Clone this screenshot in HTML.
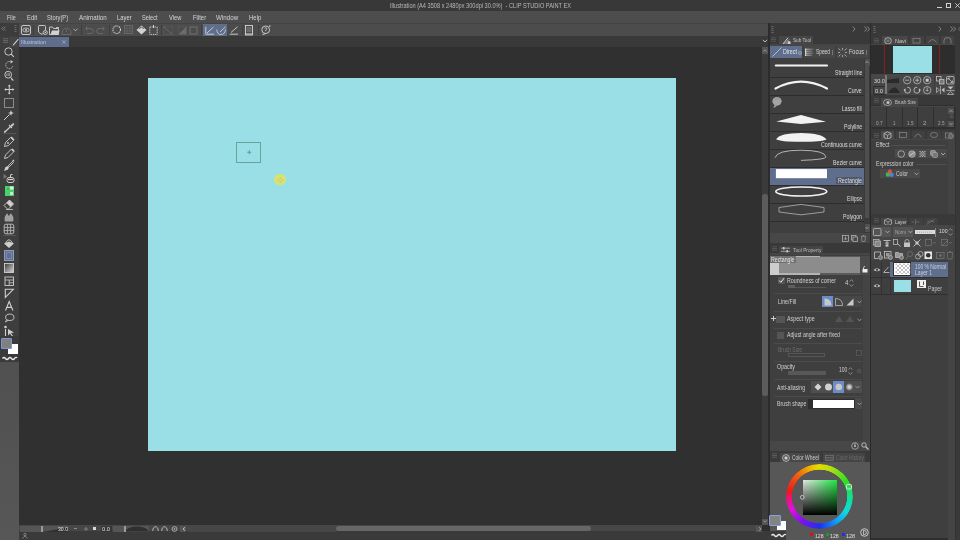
<!DOCTYPE html>
<html><head><meta charset="utf-8">
<style>
*{box-sizing:border-box;margin:0;padding:0}
html,body{width:960px;height:540px;overflow:hidden;background:#2e2e2e;font-family:"Liberation Sans",sans-serif;color:#d8d8d8}
.a{position:absolute}
svg.a{overflow:visible}
.t{position:absolute;white-space:nowrap;line-height:1;transform-origin:0 0}
</style></head><body>
<div class="a" style="left:0px;top:0px;width:960px;height:11.3px;background:#383838;"></div>
<div class="t" style="transform:scaleX(0.8048);left:390px;top:2.47px;font-size:7px;color:#b8b8b8;font-weight:normal;">Illustration (A4 3508 x 2480px 300dpi 30.0%)&nbsp; - CLIP STUDIO PAINT EX</div>
<div class="a" style="left:936.7px;top:7px;width:5.2px;height:1px;background:#cfcfcf;"></div>
<div class="a" style="left:945.9px;top:3px;width:5.4px;height:5px;border:1px solid #d4d4d4;background:transparent;"></div>
<svg class="a" style="left:954.8px;top:3px;" width="5" height="5" viewBox="0 0 5 5"><path d="M0.3 0.3L4.7 4.7M4.7 0.3L0.3 4.7" stroke="#d4d4d4" stroke-width="0.9"/></svg>
<div class="a" style="left:0px;top:11.3px;width:960px;height:11.7px;background:#4d4d4d;"></div>
<div class="t" style="transform:scaleX(0.8298);left:7.3px;top:15.00px;font-size:6.5px;color:#d6d6d6;font-weight:normal;">File</div>
<div class="t" style="transform:scaleX(0.9105);left:27px;top:15.00px;font-size:6.5px;color:#d6d6d6;font-weight:normal;">Edit</div>
<div class="t" style="transform:scaleX(0.8849);left:47.4px;top:15.00px;font-size:6.5px;color:#d6d6d6;font-weight:normal;">Story(P)</div>
<div class="t" style="transform:scaleX(0.9583);left:78.8px;top:15.00px;font-size:6.5px;color:#d6d6d6;font-weight:normal;">Animation</div>
<div class="t" style="transform:scaleX(0.8976);left:117.4px;top:15.00px;font-size:6.5px;color:#d6d6d6;font-weight:normal;">Layer</div>
<div class="t" style="transform:scaleX(0.8629);left:142.4px;top:15.00px;font-size:6.5px;color:#d6d6d6;font-weight:normal;">Select</div>
<div class="t" style="transform:scaleX(0.8796);left:169px;top:15.00px;font-size:6.5px;color:#d6d6d6;font-weight:normal;">View</div>
<div class="t" style="transform:scaleX(0.9064);left:192.7px;top:15.00px;font-size:6.5px;color:#d6d6d6;font-weight:normal;">Filter</div>
<div class="t" style="transform:scaleX(0.9600);left:216px;top:15.00px;font-size:6.5px;color:#d6d6d6;font-weight:normal;">Window</div>
<div class="t" style="transform:scaleX(0.9271);left:248.9px;top:15.00px;font-size:6.5px;color:#d6d6d6;font-weight:normal;">Help</div>
<div class="a" style="left:0px;top:23px;width:769px;height:13px;background:#4c4c4c;border-top:1px solid #444444"></div>
<div class="a" style="left:0px;top:23px;width:19px;height:13px;background:#3c3c3c;"></div>
<div class="a" style="left:19px;top:36px;width:750px;height:11px;background:#393939;"></div>
<div class="a" style="left:0px;top:36px;width:19px;height:11px;background:#3e3e3e;"></div>
<div class="a" style="left:0px;top:47px;width:19px;height:315px;background:#3e3e3e;"></div>
<div class="a" style="left:0px;top:362px;width:19px;height:178px;background:linear-gradient(#505050,#575757);"></div>
<div class="a" style="left:19px;top:47px;width:743px;height:478px;background:#303030;"></div>
<div class="a" style="left:148px;top:78px;width:528px;height:373px;background:#99dfe5;"></div>
<div class="a" style="left:762px;top:47px;width:6px;height:478px;background:#3b3b3b;"></div>
<div class="a" style="left:768px;top:23px;width:2px;height:517px;background:#2c2c2c;"></div>
<div class="a" style="left:19px;top:525px;width:743px;height:6px;background:#474747;"></div>
<div class="a" style="left:19px;top:531px;width:750px;height:9px;background:#3a3a3a;"></div>
<div class="a" style="left:770px;top:23px;width:100px;height:11px;background:#383838;"></div>
<div class="a" style="left:770px;top:34px;width:100px;height:11px;background:#353535;"></div>
<div class="a" style="left:770px;top:45px;width:100px;height:195px;background:#3d3d3d;"></div>
<div class="a" style="left:870px;top:23px;width:1px;height:517px;background:#2a2a2a;"></div>
<div class="a" style="left:871px;top:23px;width:89px;height:11px;background:#383838;"></div>
<div class="a" style="left:871px;top:34px;width:89px;height:10px;background:#353535;"></div>
<div class="a" style="left:871px;top:44px;width:84px;height:29px;background:#2c2c2c;"></div>
<div class="a" style="left:893px;top:45px;width:39px;height:28px;background:#99dfe5;"></div>
<svg class="a" style="left:1px;top:26px;" width="5" height="5" viewBox="0 0 5 5"><path d="M2.5 0.5L0.6 2.5L2.5 4.5M4.6 0.5L2.7 2.5L4.6 4.5" stroke="#8a8a8a" fill="none" stroke-width="0.7"/></svg>
<svg class="a" style="left:14px;top:25px;" width="3" height="7" viewBox="0 0 3 7"><path d="M1.5 0V7" stroke="#6a6a6a" stroke-width="2" stroke-dasharray="1 1"/></svg>
<svg class="a" style="left:21px;top:25px;" width="10" height="10" viewBox="0 0 10 10"><rect x="0.5" y="0.5" width="9" height="9" rx="1.5" fill="none" stroke="#d2d2d2" stroke-width="0.9"/><ellipse cx="5" cy="5" rx="3.2" ry="2" fill="none" stroke="#d2d2d2" stroke-width="0.8"/><circle cx="5" cy="5" r="1" fill="#d2d2d2"/></svg>
<div class="a" style="left:33px;top:25px;width:1px;height:10px;background:#3e3e3e;"></div>
<svg class="a" style="left:38px;top:25px;" width="10" height="10" viewBox="0 0 10 10"><path d="M1 0.5H6.5Q7.5 0.5 7.5 1.5V5M1 0.5Q0.5 0.5 0.5 1.5V7L3 9H5" fill="none" stroke="#d2d2d2" stroke-width="0.9"/><circle cx="7.3" cy="7.5" r="2" fill="none" stroke="#d2d2d2" stroke-width="0.9"/><circle cx="7.3" cy="7.5" r="0.7" fill="#d2d2d2"/></svg>
<svg class="a" style="left:49px;top:26px;" width="11" height="9" viewBox="0 0 11 9"><path d="M0.5 1.5V8.5H9.5V2.5H4.5L3.5 1H0.5Z" fill="none" stroke="#d2d2d2" stroke-width="0.9"/><path d="M1.5 8.5L3 4.5H10.5L9.5 8.5Z" fill="#d2d2d2"/><path d="M7 1.5H10" stroke="#d2d2d2" stroke-width="0.8"/></svg>
<svg class="a" style="left:61px;top:27px;" width="11" height="8" viewBox="0 0 11 8"><path d="M1 7.5H10V6Q10 2 5.5 1Q1 2 1 6Z" fill="none" stroke="#6c6c6c" stroke-width="0.9"/><path d="M5.5 2.5V5" stroke="#6c6c6c" stroke-width="0.9"/></svg>
<svg class="a" style="left:73px;top:28px;" width="5" height="4" viewBox="0 0 5 4"><path d="M0.5 0.8L2.5 2.8L4.5 0.8" fill="none" stroke="#bdbdbd" stroke-width="0.9"/></svg>
<div class="a" style="left:81px;top:25px;width:1px;height:10px;background:#3e3e3e;"></div>
<svg class="a" style="left:85px;top:26px;" width="9" height="8" viewBox="0 0 9 8"><path d="M2.5 0.5L0.5 2.5L2.5 4.5M0.8 2.5H5Q8.5 2.5 8.5 5.2Q8.5 7.5 5 7.5H2" fill="none" stroke="#6c6c6c" stroke-width="0.9"/></svg>
<svg class="a" style="left:96px;top:26px;" width="9" height="8" viewBox="0 0 9 8"><path d="M6.5 0.5L8.5 2.5L6.5 4.5M8.2 2.5H4Q0.5 2.5 0.5 5.2Q0.5 7.5 4 7.5H7" fill="none" stroke="#6c6c6c" stroke-width="0.9"/></svg>
<div class="a" style="left:109px;top:25px;width:1px;height:10px;background:#3e3e3e;"></div>
<svg class="a" style="left:112px;top:25px;" width="10" height="10" viewBox="0 0 10 10"><circle cx="4.7" cy="4.7" r="3.8" fill="none" stroke="#d2d2d2" stroke-width="1.1" stroke-dasharray="1.2 0.8"/></svg>
<svg class="a" style="left:124px;top:25px;" width="10" height="9" viewBox="0 0 10 9"><rect x="0.5" y="0.5" width="8" height="8" fill="none" stroke="#6c6c6c" stroke-width="0.9"/><path d="M0.5 3H8.5M0.5 6H8.5M3 0.5V8.5M6 0.5V8.5" stroke="#6c6c6c" stroke-width="0.6"/></svg>
<svg class="a" style="left:136px;top:25px;" width="11" height="10" viewBox="0 0 11 10"><path d="M5.5 0.5L10.5 5L5.5 9.5L0.5 5Z" fill="#d2d2d2"/><path d="M3 3.5Q5.5 1 8 3.5" stroke="#4a4a4a" stroke-width="0.9" fill="none"/></svg>
<svg class="a" style="left:149px;top:25px;" width="9" height="10" viewBox="0 0 9 10"><rect x="0.8" y="2" width="7.4" height="7.4" fill="none" stroke="#d2d2d2" stroke-width="1" stroke-dasharray="1 0.8"/><path d="M4.5 0V3" stroke="#d2d2d2" stroke-width="1"/></svg>
<div class="a" style="left:161px;top:25px;width:1px;height:10px;background:#3e3e3e;"></div>
<svg class="a" style="left:163px;top:26px;" width="10" height="9" viewBox="0 0 10 9"><rect x="0.5" y="0.5" width="9" height="8" fill="none" stroke="#5a5a5a" stroke-width="0.6"/><path d="M0.5 0.5L9.5 8.5" stroke="#6c6c6c" stroke-width="0.9"/></svg>
<svg class="a" style="left:178px;top:26px;" width="9" height="9" viewBox="0 0 9 9"><path d="M8.5 0.5V8.5H0.5Z" fill="#6c6c6c"/><rect x="0.5" y="0.5" width="8" height="8" fill="none" stroke="#5a5a5a" stroke-width="0.6"/></svg>
<svg class="a" style="left:189px;top:26px;" width="9" height="9" viewBox="0 0 9 9"><rect x="1" y="1" width="7" height="7" fill="none" stroke="#6c6c6c" stroke-width="1.2"/></svg>
<div class="a" style="left:201px;top:25px;width:1px;height:10px;background:#3e3e3e;"></div>
<div class="a" style="left:203px;top:24px;width:24px;height:12px;background:#606e8e;"></div>
<svg class="a" style="left:205px;top:26px;" width="10" height="9" viewBox="0 0 10 9"><path d="M0.8 0.8V8.2H9" fill="none" stroke="#d2d2d2" stroke-width="0.9"/><path d="M2 7L8.5 1" stroke="#d2d2d2" stroke-width="0.9"/></svg>
<svg class="a" style="left:216px;top:26px;" width="10" height="9" viewBox="0 0 10 9"><path d="M0.8 3.5Q1 8.5 5 8.5Q9 8.5 9.5 3.5" fill="none" stroke="#d2d2d2" stroke-width="0.8"/><path d="M4 6L9.5 0.8" stroke="#d2d2d2" stroke-width="0.9"/></svg>
<svg class="a" style="left:229px;top:26px;" width="10" height="9" viewBox="0 0 10 9"><path d="M0.8 8.2H9" fill="none" stroke="#d2d2d2" stroke-width="0.9"/><path d="M2 6.5L8.5 0.8" stroke="#d2d2d2" stroke-width="0.9"/></svg>
<div class="a" style="left:242px;top:25px;width:1px;height:10px;background:#3e3e3e;"></div>
<svg class="a" style="left:245px;top:25px;" width="8" height="10" viewBox="0 0 8 10"><rect x="0.5" y="0.5" width="7" height="9.5" fill="none" stroke="#d2d2d2" stroke-width="0.9"/><rect x="1.5" y="2" width="5" height="5" fill="#6a6a6a"/><path d="M1 9H7" stroke="#d2d2d2" stroke-width="1"/></svg>
<div class="a" style="left:258px;top:25px;width:1px;height:10px;background:#3e3e3e;"></div>
<svg class="a" style="left:261px;top:25px;" width="10" height="10" viewBox="0 0 10 10"><path d="M4.7 8.5Q0.8 8.5 0.8 4.8Q0.8 1 4.7 1Q8.6 1 8.6 4.8Q8.6 8.5 4.7 8.5L1.5 9.8" fill="none" stroke="#d2d2d2" stroke-width="0.9"/><path d="M3.5 3.5Q4.7 2 5.8 3.3Q6 4.5 4.7 5V6.2" fill="none" stroke="#d2d2d2" stroke-width="0.8"/><circle cx="8.8" cy="1" r="0.8" fill="#d2d2d2"/></svg>
<svg class="a" style="left:3px;top:38px;" width="5" height="6" viewBox="0 0 5 6"><path d="M0 0.8H5M0 2.6H5M0 4.4H5" stroke="#6a6a6a" stroke-width="1"/></svg>
<div class="a" style="left:9px;top:37px;width:9px;height:10px;background:#454545;"></div>
<svg class="a" style="left:12px;top:38px;" width="7" height="8" viewBox="0 0 7 8"><path d="M6 0.8L1 6.5L0.7 7.5L1.8 7.2L6.8 1.6Z" fill="#d2d2d2"/></svg>
<div class="a" style="left:19px;top:37px;width:50px;height:10px;background:#606e8e;"></div>
<div class="t" style="transform:scaleX(0.8864);left:21px;top:39.25px;font-size:6.2px;color:#b9c0cf;font-weight:normal;">Illustration</div>
<svg class="a" style="left:62.3px;top:40px;" width="4" height="4" viewBox="0 0 4 4"><path d="M0.3 0.3L3.7 3.7M3.7 0.3L0.3 3.7" stroke="#aeb6c6" stroke-width="0.7"/></svg>
<svg class="a" style="left:762px;top:39px;" width="6" height="4" viewBox="0 0 6 4"><path d="M0.8 0.8L3 3L5.2 0.8" fill="none" stroke="#c8c8c8" stroke-width="0.9"/></svg>
<svg class="a" style="left:3px;top:45.5px;" width="12" height="12" viewBox="0 0 12 12"><circle cx="5.5" cy="5.5" r="3.7" fill="none" stroke="#cfcfcf" stroke-width="0.9"/><path d="M8.2 8.2L10.8 10.8" stroke="#cfcfcf" stroke-width="1.1"/></svg>
<svg class="a" style="left:2.5px;top:58.5px;" width="12" height="12" viewBox="0 0 12 12"><path d="M9.8 7.2A3.6 3.6 0 1 1 7.2 2.6" fill="none" stroke="#cfcfcf" stroke-width="0.9" stroke-dasharray="1.1 0.7"/><path d="M7.5 1L10.2 2.8L7.5 4.6Z" fill="#cfcfcf"/></svg>
<svg class="a" style="left:3px;top:70.0px;" width="12" height="12" viewBox="0 0 12 12"><circle cx="5.2" cy="4.7" r="3.4" fill="none" stroke="#cfcfcf" stroke-width="0.9"/><path d="M3.8 3.5V6M5.2 2.8V6M6.6 3.3V6" stroke="#cfcfcf" stroke-width="0.6"/><path d="M7.5 6.5L11 10.5L9 10.6L8 8.8Z" fill="#cfcfcf"/></svg>
<svg class="a" style="left:3px;top:83.0px;" width="12" height="13" viewBox="0 0 12 13"><path d="M6.3 2.5V10.5M2.3 6.5H10.3" stroke="#cfcfcf" stroke-width="1"/><path d="M6.3 1.5L4.8 3.3H7.8ZM6.3 11.5L4.8 9.7H7.8ZM1.3 6.5L3.1 5V8ZM11.3 6.5L9.5 5V8Z" fill="#cfcfcf"/></svg>
<svg class="a" style="left:3px;top:96.5px;" width="12" height="12" viewBox="0 0 12 12"><rect x="1.5" y="1.5" width="9" height="9" fill="none" stroke="#cfcfcf" stroke-width="0.9" stroke-dasharray="1.2 0.8"/></svg>
<svg class="a" style="left:3px;top:109.0px;" width="12" height="12" viewBox="0 0 12 12"><path d="M1 11L6.5 5.5" stroke="#cfcfcf" stroke-width="1"/><path d="M8 1L8.8 3.2L11 4L8.8 4.8L8 7L7.2 4.8L5 4L7.2 3.2Z" fill="#cfcfcf"/></svg>
<svg class="a" style="left:3px;top:121.5px;" width="12" height="12" viewBox="0 0 12 12"><path d="M1.5 10.5L7.5 4.5M6 3L9 6" stroke="#cfcfcf" stroke-width="1.1"/><path d="M7.5 3.5L9.5 1.5Q10.5 0.8 11 1.5Q11.5 2.2 10.7 3L8.5 5Z" fill="#cfcfcf"/><path d="M1.5 10.5L2 8.5" stroke="#cfcfcf"/></svg>
<div class="a" style="left:3px;top:133px;width:13px;height:1px;background:#555555;"></div>
<svg class="a" style="left:3px;top:135.5px;" width="12" height="12" viewBox="0 0 12 12"><path d="M1.5 10.5L2.5 6.5L7.5 1.5L10.5 4.5L5.5 9.5Z" fill="none" stroke="#cfcfcf" stroke-width="0.9"/><path d="M8 1L11 4" stroke="#cfcfcf" stroke-width="1.5"/><circle cx="5" cy="7" r="0.9" fill="#cfcfcf"/></svg>
<svg class="a" style="left:3px;top:147.5px;" width="12" height="12" viewBox="0 0 12 12"><path d="M1.5 10.5L2.5 7L8.5 1L11 3.5L5 9.5Z" fill="none" stroke="#cfcfcf" stroke-width="0.9"/><path d="M8 1.5L10.5 4L11.5 2.5L9.5 0.5Z" fill="#cfcfcf"/></svg>
<svg class="a" style="left:3px;top:160.0px;" width="12" height="12" viewBox="0 0 12 12"><path d="M1 11L2.5 7L5 6L6 7L5 9.5Z" fill="#cfcfcf"/><path d="M5 6L9.5 1.5L10.5 2.5L6 7" fill="none" stroke="#cfcfcf" stroke-width="0.9"/><path d="M9.5 1.5L11 0" stroke="#cfcfcf" stroke-width="1.2"/></svg>
<svg class="a" style="left:3px;top:172.0px;" width="12" height="12" viewBox="0 0 12 12"><path d="M0.5 2L4 4.5L0.5 7Z" fill="#777"/><rect x="4" y="5.5" width="7" height="5" rx="2" fill="none" stroke="#cfcfcf" stroke-width="1"/><path d="M5 7.5H10" stroke="#cfcfcf" stroke-width="1.2"/><path d="M7.5 5.5V3M7.5 2.5H9.5" stroke="#cfcfcf" stroke-width="1"/></svg>
<div class="a" style="left:4.5px;top:186px;width:9px;height:10px;background:#45d36a;"></div>
<svg class="a" style="left:4.5px;top:186px;" width="9" height="10" viewBox="0 0 9 10"><rect x="5" y="0.5" width="3.5" height="3" fill="#e8e8e8"/><rect x="5" y="6" width="3" height="3" fill="#dcdcdc"/><path d="M2 3H4" stroke="#2a6a3a" stroke-width="0.6"/></svg>
<svg class="a" style="left:3px;top:198.0px;" width="12" height="12" viewBox="0 0 12 12"><path d="M1 7.5L6.5 2L10.5 6L5 11.5Z" fill="none" stroke="#cfcfcf" stroke-width="0.9"/><path d="M3.5 5L6.5 2L10.5 6L7.5 9Z" fill="#cfcfcf"/><path d="M3 11.5H10" stroke="#cfcfcf" stroke-width="0.8"/></svg>
<svg class="a" style="left:3px;top:210.5px;" width="12" height="12" viewBox="0 0 12 12"><path d="M1.8 10.5Q0.8 7 2.2 5Q3.2 3.5 4.2 2.2Q5 3.8 5.8 5Q6.8 3.5 8 2.2Q9 3.8 9.8 5Q11.2 7 10.2 10.5Z" fill="#a0a0a0"/></svg>
<svg class="a" style="left:3px;top:223.0px;" width="12" height="12" viewBox="0 0 12 12"><rect x="1.2" y="1.2" width="9.6" height="9.6" rx="1.8" fill="none" stroke="#cfcfcf" stroke-width="0.8"/><path d="M1.2 4.4H10.8M1.2 7.6H10.8M4.4 1.2V10.8M7.6 1.2V10.8" stroke="#cfcfcf" stroke-width="0.7"/><path d="M4.4 4.4L7.6 7.6" stroke="#9a9a9a" stroke-width="0.5"/></svg>
<div class="a" style="left:3px;top:235px;width:13px;height:1px;background:#555555;"></div>
<svg class="a" style="left:3px;top:236.5px;" width="12" height="12" viewBox="0 0 12 12"><path d="M2.5 6Q6 -0.5 9.5 6" fill="none" stroke="#cfcfcf" stroke-width="0.9"/><path d="M1 6.5L6 4.5L11 6.5L6 11Z" fill="#cfcfcf"/></svg>
<div class="a" style="left:3.5px;top:249.5px;width:10.5px;height:11px;background:#606e8e;border:1px solid #8a9cc4"></div>
<div class="a" style="left:5.5px;top:251.5px;width:6.5px;height:7px;background:transparent;border:0.6px solid #7c8bab"></div>
<svg class="a" style="left:3px;top:262.0px;" width="12" height="12" viewBox="0 0 12 12"><defs><linearGradient id="g1" x1="0" y1="0" x2="1" y2="1"><stop offset="0" stop-color="#3a3a3a"/><stop offset="1" stop-color="#d8d8d8"/></linearGradient></defs><rect x="1.5" y="1.5" width="9" height="9" fill="url(#g1)" stroke="#cfcfcf" stroke-width="0.9"/></svg>
<svg class="a" style="left:3px;top:275.0px;" width="12" height="12" viewBox="0 0 12 12"><rect x="2" y="2" width="8.5" height="8.5" fill="none" stroke="#cfcfcf" stroke-width="0.9"/><path d="M2 5H10.5M6.2 5V10.5M6.2 7.8H10.5" stroke="#cfcfcf" stroke-width="0.8"/></svg>
<svg class="a" style="left:3px;top:287.0px;" width="12" height="12" viewBox="0 0 12 12"><path d="M2.3 10.3V2.3H10.3Z" fill="none" stroke="#cfcfcf" stroke-width="1.1"/></svg>
<svg class="a" style="left:3px;top:300.0px;" width="12" height="12" viewBox="0 0 12 12"><path d="M2.5 10.5L6.2 1.5L9.9 10.5M3.8 7.4H8.6" fill="none" stroke="#cfcfcf" stroke-width="1.1"/></svg>
<svg class="a" style="left:3px;top:312.0px;" width="12" height="12" viewBox="0 0 12 12"><ellipse cx="6.8" cy="5.3" rx="4.2" ry="3.2" fill="none" stroke="#cfcfcf" stroke-width="0.9"/><path d="M3.8 7.8L2.3 10L5.3 8.3" fill="none" stroke="#cfcfcf" stroke-width="0.8"/></svg>
<svg class="a" style="left:3px;top:325.0px;" width="12" height="12" viewBox="0 0 12 12"><circle cx="2.5" cy="2" r="1.3" fill="#cfcfcf"/><path d="M2.5 4V11" stroke="#cfcfcf" stroke-width="1.1"/><path d="M5 4L11 7.5L8 8L10 11L9 11.5L7 8.5L5 10.5Z" fill="#cfcfcf"/></svg>
<div class="a" style="left:0px;top:336px;width:19px;height:26px;background:#3a3a3a;"></div>
<div class="a" style="left:8px;top:344px;width:9.5px;height:9.5px;background:#ffffff;"></div>
<div class="a" style="left:1px;top:337.5px;width:11px;height:11px;background:#808080;border:1px solid #7f97d0;border-radius:1px"></div>
<svg class="a" style="left:2px;top:355.5px;" width="15" height="4" viewBox="0 0 15 4"><path d="M0.5 2.5Q2 0.5 3.5 2.5T6.5 2.5T9.5 2.5T12.5 2.5T15 2" fill="none" stroke="#e8e8e8" stroke-width="1.3"/></svg>
<div class="a" style="left:770px;top:23px;width:100px;height:11px;background:#393939;"></div>
<svg class="a" style="left:771px;top:26px;" width="3" height="7" viewBox="0 0 3 7"><path d="M1.5 0V7" stroke="#6a6a6a" stroke-width="2" stroke-dasharray="1 1"/></svg>
<svg class="a" style="left:852px;top:26px;" width="4" height="6" viewBox="0 0 4 6"><path d="M0.8 0.5L3 3L0.8 5.5" fill="none" stroke="#8a8a8a" stroke-width="0.9"/></svg>
<svg class="a" style="left:864px;top:26px;" width="6" height="6" viewBox="0 0 6 6"><path d="M0.5 0.5L2.7 3L0.5 5.5M3.3 0.5L5.5 3L3.3 5.5" fill="none" stroke="#8a8a8a" stroke-width="0.9"/></svg>
<div class="a" style="left:770px;top:34px;width:100px;height:10px;background:#393939;"></div>
<svg class="a" style="left:771px;top:37px;" width="5" height="5" viewBox="0 0 5 5"><path d="M0 0.8H5M0 2.5H5M0 4.2H5" stroke="#585858" stroke-width="0.9"/></svg>
<div class="a" style="left:779px;top:36px;width:34px;height:8px;background:#464646;"></div>
<svg class="a" style="left:782px;top:36.5px;" width="9" height="8" viewBox="0 0 9 8"><path d="M0.5 7.5L6 0.8" stroke="#d2d2d2" stroke-width="1"/><path d="M2 7.5L7 2.5M4 7.5L7.5 4" stroke="#d2d2d2" stroke-width="0.8"/><rect x="6" y="4.5" width="2.5" height="3" fill="#d2d2d2"/></svg>
<div class="t" style="transform:scaleX(0.7742);left:793px;top:37.22px;font-size:6px;color:#c8c8c8;font-weight:normal;">Sub Tool</div>
<div class="a" style="left:770px;top:44px;width:100px;height:2px;background:#454545;"></div>
<div class="a" style="left:770px;top:46px;width:100px;height:194px;background:#3f3f3f;"></div>
<div class="a" style="left:770px;top:46px;width:32px;height:11.5px;background:#606e8e;"></div>
<div class="a" style="left:803.5px;top:46px;width:31.5px;height:11.5px;background:#474747;"></div>
<div class="a" style="left:837px;top:46px;width:31.5px;height:11.5px;background:#474747;"></div>
<svg class="a" style="left:772px;top:47px;" width="10" height="10" viewBox="0 0 10 10"><path d="M0.5 9.5L9.5 0.5" stroke="#c8cfdc" stroke-width="0.8"/></svg>
<div class="t" style="transform:scaleX(0.8382);left:783px;top:49.28px;font-size:6.4px;color:#dfe3ea;font-weight:normal;">Direct</div>
<svg class="a" style="left:797.5px;top:50.5px;" width="4" height="4" viewBox="0 0 4 4"><circle cx="2" cy="2" r="1.5" fill="none" stroke="#c0c6d2" stroke-width="0.6"/></svg>
<svg class="a" style="left:805px;top:47.5px;" width="9" height="9" viewBox="0 0 9 9"><defs><linearGradient id="sp"><stop offset="0" stop-color="#e0e0e0"/><stop offset="1" stop-color="#6a6a6a"/></linearGradient></defs><path d="M0.5 1.2H8.5M0.5 3.2H7.5M0.5 5.2H8.5M0.5 7.2H7" stroke="url(#sp)" stroke-width="0.9"/><path d="M0.6 0.5V8" stroke="#ddd" stroke-width="1"/></svg>
<div class="t" style="transform:scaleX(0.7574);left:816px;top:49.28px;font-size:6.4px;color:#d8d8d8;font-weight:normal;">Speed</div>
<div class="a" style="left:832px;top:50px;width:1px;height:5px;background:#777;"></div>
<svg class="a" style="left:838px;top:47.5px;" width="9" height="9" viewBox="0 0 9 9"><path d="M0.5 0.5L2.5 2.5M8.5 0.5L6.5 2.5M0.5 8.5L2.5 6.5M8.5 8.5L6.5 6.5M4.5 0V2M4.5 7V9M0 4.5H2M7 4.5H9" stroke="#b8b8b8" stroke-width="0.8"/></svg>
<div class="t" style="transform:scaleX(0.8618);left:849px;top:49.28px;font-size:6.4px;color:#d8d8d8;font-weight:normal;">Focus</div>
<div class="a" style="left:866px;top:50px;width:1px;height:5px;background:#777;"></div>
<div class="a" style="left:770px;top:60px;width:94px;height:17px;background:#3f3f3f;"></div>
<div class="a" style="left:770px;top:77px;width:94px;height:1px;background:#2d2d2d;"></div>
<div class="a" style="left:770px;top:78px;width:94px;height:17px;background:#3f3f3f;"></div>
<div class="a" style="left:770px;top:95px;width:94px;height:1px;background:#2d2d2d;"></div>
<div class="a" style="left:770px;top:96px;width:94px;height:17px;background:#3f3f3f;"></div>
<div class="a" style="left:770px;top:113px;width:94px;height:1px;background:#2d2d2d;"></div>
<div class="a" style="left:770px;top:114px;width:94px;height:17px;background:#3f3f3f;"></div>
<div class="a" style="left:770px;top:131px;width:94px;height:1px;background:#2d2d2d;"></div>
<div class="a" style="left:770px;top:132px;width:94px;height:17px;background:#3f3f3f;"></div>
<div class="a" style="left:770px;top:149px;width:94px;height:1px;background:#2d2d2d;"></div>
<div class="a" style="left:770px;top:150px;width:94px;height:17px;background:#3f3f3f;"></div>
<div class="a" style="left:770px;top:167px;width:94px;height:1px;background:#2d2d2d;"></div>
<div class="a" style="left:770px;top:168px;width:94px;height:17px;background:#606e8e;"></div>
<div class="a" style="left:770px;top:185px;width:94px;height:1px;background:#2d2d2d;"></div>
<div class="a" style="left:770px;top:186px;width:94px;height:17px;background:#3f3f3f;"></div>
<div class="a" style="left:770px;top:203px;width:94px;height:1px;background:#2d2d2d;"></div>
<div class="a" style="left:770px;top:204px;width:94px;height:17px;background:#3f3f3f;"></div>
<div class="a" style="left:770px;top:221px;width:94px;height:1px;background:#2d2d2d;"></div>
<div class="a" style="left:770px;top:222px;width:94px;height:11px;background:#3f3f3f;"></div>
<div class="a" style="left:770px;top:58px;width:94px;height:2px;background:#3f3f3f;"></div>
<div class="t" style="left:834.60px;transform:scaleX(0.7982);top:69.70px;font-size:6.5px;color:#dcdcdc;font-weight:normal;">Straight line</div>
<div class="t" style="left:848.30px;transform:scaleX(0.7899);top:87.70px;font-size:6.5px;color:#dcdcdc;font-weight:normal;">Curve</div>
<div class="t" style="left:842.30px;transform:scaleX(0.7788);top:105.70px;font-size:6.5px;color:#dcdcdc;font-weight:normal;">Lasso fill</div>
<div class="t" style="left:843.80px;transform:scaleX(0.7995);top:123.70px;font-size:6.5px;color:#dcdcdc;font-weight:normal;">Polyline</div>
<div class="t" style="left:821.00px;transform:scaleX(0.8104);top:141.70px;font-size:6.5px;color:#dcdcdc;font-weight:normal;">Continuous curve</div>
<div class="t" style="left:833.00px;transform:scaleX(0.8028);top:159.70px;font-size:6.5px;color:#dcdcdc;font-weight:normal;">Bezier curve</div>
<div class="a" style="left:836.4px;top:177px;width:26px;height:7px;background:#50586a;"></div>
<div class="t" style="left:838.00px;transform:scaleX(0.8196);top:177.70px;font-size:6.5px;color:#dcdcdc;font-weight:normal;">Rectangle</div>
<div class="t" style="left:847.00px;transform:scaleX(0.7830);top:195.70px;font-size:6.5px;color:#dcdcdc;font-weight:normal;">Ellipse</div>
<div class="t" style="left:843.00px;transform:scaleX(0.8085);top:213.70px;font-size:6.5px;color:#dcdcdc;font-weight:normal;">Polygon</div>
<svg class="a" style="left:772px;top:60px;" width="60" height="17" viewBox="0 0 60 17"><path d="M3.8 5.5H55" stroke="#f2f2f2" stroke-width="2.2" stroke-linecap="round"/></svg>
<svg class="a" style="left:772px;top:78px;" width="60" height="17" viewBox="0 0 60 17"><path d="M3.5 10.5Q29 -3.2 55 10.5" fill="none" stroke="#f2f2f2" stroke-width="2.2" stroke-linecap="round"/></svg>
<svg class="a" style="left:772px;top:96px;" width="60" height="17" viewBox="0 0 60 17"><ellipse cx="5" cy="5.3" rx="4.6" ry="4.2" fill="#a4a4a4"/><path d="M1.5 11.5Q2 8.5 4.5 8.6L6 9.3Q4 9.8 2.5 11.8Z" fill="#a0a0a0"/><path d="M2.5 4Q5 1.5 8 3.5" stroke="#8a8a8a" stroke-width="0.6" fill="none"/></svg>
<svg class="a" style="left:772px;top:114px;" width="60" height="17" viewBox="0 0 60 17"><path d="M4.3 7.4L29 0.9L54 7.7L29 10.1Z" fill="#f2f2f2"/></svg>
<svg class="a" style="left:772px;top:132px;" width="60" height="17" viewBox="0 0 60 17"><path d="M4 7.3Q8 0.9 29 0.9Q50 0.9 54.5 7.5Q50 9.8 29 9.8Q8 9.8 4 7.3Z" fill="#f2f2f2"/></svg>
<svg class="a" style="left:772px;top:150px;" width="60" height="17" viewBox="0 0 60 17"><path d="M3 7.7Q5 0.2 29 0.2Q53 0.5 54 6.9Q54.5 9.5 29 10.4" fill="none" stroke="#d0d0d0" stroke-width="0.8"/></svg>
<svg class="a" style="left:772px;top:168px;" width="60" height="17" viewBox="0 0 60 17"><rect x="3.9" y="1.1" width="51.1" height="9.1" fill="#ffffff"/></svg>
<svg class="a" style="left:772px;top:186px;" width="60" height="17" viewBox="0 0 60 17"><ellipse cx="29.3" cy="5.5" rx="25.5" ry="4.5" fill="none" stroke="#f2f2f2" stroke-width="1.6"/></svg>
<svg class="a" style="left:772px;top:204px;" width="60" height="17" viewBox="0 0 60 17"><path d="M7 3.5L29 0.4L52 3.5V8L29 10.8L7 8Z" fill="none" stroke="#c4c4c4" stroke-width="0.7"/></svg>
<div class="a" style="left:864px;top:58.5px;width:6px;height:174.5px;background:#3a3a3a;"></div>
<div class="a" style="left:864.5px;top:59px;width:5px;height:7px;background:#505050;"></div>
<svg class="a" style="left:865px;top:60px;" width="4" height="4" viewBox="0 0 4 4"><path d="M0.5 3L2 1.2L3.5 3" fill="none" stroke="#aaa" stroke-width="0.7"/></svg>
<div class="a" style="left:865px;top:66px;width:4px;height:152px;background:#4e4e4e;"></div>
<div class="a" style="left:864.5px;top:224px;width:5px;height:8px;background:#505050;"></div>
<svg class="a" style="left:865px;top:226px;" width="4" height="4" viewBox="0 0 4 4"><path d="M0.5 1L2 2.8L3.5 1" fill="none" stroke="#aaa" stroke-width="0.7"/></svg>
<div class="a" style="left:770px;top:233px;width:100px;height:11px;background:#474747;"></div>
<svg class="a" style="left:842px;top:235px;" width="7" height="7" viewBox="0 0 7 7"><rect x="0.5" y="0.5" width="6" height="6" fill="none" stroke="#bbb" stroke-width="0.7"/><path d="M3.5 1.5V4.5M2 3.3L3.5 4.8L5 3.3" fill="none" stroke="#bbb" stroke-width="0.7"/></svg>
<svg class="a" style="left:851px;top:235px;" width="7" height="7" viewBox="0 0 7 7"><rect x="0.5" y="0.5" width="4.5" height="4.5" fill="none" stroke="#bbb" stroke-width="0.7"/><rect x="2" y="2" width="4.5" height="4.5" fill="#474747" stroke="#bbb" stroke-width="0.7"/></svg>
<svg class="a" style="left:860px;top:235px;" width="7" height="7" viewBox="0 0 7 7"><path d="M1 1.5H6M2.5 0.5H4.5M1.5 1.5L2 6.5H5L5.5 1.5" fill="none" stroke="#999" stroke-width="0.7"/></svg>
<div class="a" style="left:770px;top:243px;width:100px;height:10px;background:#393939;"></div>
<svg class="a" style="left:772px;top:246px;" width="5" height="5" viewBox="0 0 5 5"><path d="M0 0.8H5M0 2.5H5M0 4.2H5" stroke="#585858" stroke-width="0.9"/></svg>
<div class="a" style="left:779px;top:246px;width:44px;height:7px;background:#444444;"></div>
<svg class="a" style="left:781px;top:247px;" width="9" height="6" viewBox="0 0 9 6"><path d="M0 1.2H9M0 4.3H9" stroke="#c8c8c8" stroke-width="0.7"/><rect x="2" y="0" width="1.5" height="2.5" fill="#c8c8c8"/><rect x="5.5" y="3" width="1.5" height="2.5" fill="#c8c8c8"/></svg>
<div class="t" style="transform:scaleX(0.7763);left:792.6px;top:246.95px;font-size:6.2px;color:#bdbdbd;font-weight:normal;">Tool Property</div>
<div class="a" style="left:770px;top:253px;width:100px;height:2px;background:#454545;"></div>
<div class="a" style="left:770px;top:255px;width:100px;height:186px;background:#3f3f3f;"></div>
<div class="a" style="left:862.5px;top:275px;width:7.5px;height:166px;background:#444444;"></div>
<div class="a" style="left:769.5px;top:255.5px;width:100.5px;height:19.5px;background:#5a5a5a;"></div>
<div class="a" style="left:769.5px;top:255.5px;width:50.5px;height:19.5px;background:#b4b4b4;"></div>
<div class="a" style="left:779px;top:257.3px;width:81px;height:15.5px;background:#8c8c8c;"></div>
<div class="a" style="left:769.5px;top:263px;width:9.5px;height:12px;background:#cdcdcd;"></div>
<div class="a" style="left:769.5px;top:256px;width:26.5px;height:7px;background:#707070;"></div>
<div class="t" style="transform:scaleX(0.7912);left:770.5px;top:256.71px;font-size:6.6px;color:#e4e4e4;font-weight:normal;">Rectangle</div>
<svg class="a" style="left:861.5px;top:265.5px;" width="6" height="7" viewBox="0 0 6 7"><path d="M1.5 3V1.8Q1.5 0.5 3 0.5" fill="none" stroke="#eee" stroke-width="0.8"/><rect x="0.5" y="3" width="5" height="3.5" fill="#eee"/></svg>
<div class="a" style="left:860px;top:255.5px;width:10px;height:19.5px;background:#4a4a4a;"></div>
<svg class="a" style="left:861.5px;top:265.5px;" width="6" height="7" viewBox="0 0 6 7"><path d="M1.5 3V1.8Q1.5 0.5 3 0.5" fill="none" stroke="#eee" stroke-width="0.8"/><rect x="0.5" y="3" width="5" height="3.5" fill="#eee"/></svg>
<div class="a" style="left:777.5px;top:276.8px;width:7px;height:7px;background:#555555;"></div>
<svg class="a" style="left:777.5px;top:276.8px;" width="7" height="7" viewBox="0 0 7 7"><path d="M1.2 3.5L2.8 5.3L6 1.2" fill="none" stroke="#f0f0f0" stroke-width="1"/></svg>
<div class="t" style="transform:scaleX(0.8259);left:787px;top:277.78px;font-size:6.4px;color:#d4d4d4;font-weight:normal;">Roundness of corner</div>
<div class="t" style="transform:scaleX(0.9825);left:844.5px;top:280.08px;font-size:6.4px;color:#c8c8c8;font-weight:normal;">4</div>
<svg class="a" style="left:849px;top:279px;" width="5" height="8" viewBox="0 0 5 8"><path d="M0.5 2.5L2.5 0.8L4.5 2.5M0.5 5.5L2.5 7.2L4.5 5.5" fill="none" stroke="#aaa" stroke-width="0.7"/></svg>
<div class="a" style="left:788px;top:287px;width:38px;height:1px;background:#555555;"></div>
<div class="a" style="left:788px;top:285px;width:7px;height:3px;background:#5e5e5e;"></div>
<div class="a" style="left:774px;top:292.5px;width:88px;height:1px;background:#4b4b4b;"></div>
<div class="t" style="transform:scaleX(0.8306);left:777.7px;top:298.68px;font-size:6.4px;color:#cfcfcf;font-weight:normal;">Line/Fill</div>
<div class="a" style="left:822px;top:296px;width:40px;height:11.2px;background:#474747;"></div>
<div class="a" style="left:822px;top:296px;width:11.2px;height:11.2px;background:#6b8cc8;"></div>
<svg class="a" style="left:824px;top:298px;" width="8" height="8" viewBox="0 0 8 8"><path d="M0.5 7.5V0.5Q7.5 0.5 7.5 7.5Z" fill="#c8c8c8"/></svg>
<svg class="a" style="left:835px;top:298px;" width="8" height="8" viewBox="0 0 8 8"><path d="M0.5 7.5V0.5Q7.5 0.5 7.5 7.5Z" fill="none" stroke="#c8c8c8" stroke-width="0.7"/></svg>
<svg class="a" style="left:846px;top:298px;" width="8" height="8" viewBox="0 0 8 8"><path d="M0.5 7.5L7.5 0.5V7.5Z" fill="#c8c8c8"/></svg>
<svg class="a" style="left:856.5px;top:300px;" width="5" height="4" viewBox="0 0 5 4"><path d="M0.5 0.8L2.5 2.8L4.5 0.8" fill="none" stroke="#aaa" stroke-width="0.8"/></svg>
<div class="a" style="left:774px;top:310.5px;width:88px;height:1px;background:#4b4b4b;"></div>
<svg class="a" style="left:771px;top:316px;" width="5" height="5" viewBox="0 0 5 5"><path d="M2.5 0V5M0 2.5H5" stroke="#ddd" stroke-width="0.9"/></svg>
<div class="a" style="left:776px;top:315.5px;width:8.5px;height:7.5px;background:#555555;"></div>
<div class="t" style="transform:scaleX(0.8292);left:786.6px;top:315.68px;font-size:6.4px;color:#cfcfcf;font-weight:normal;">Aspect type</div>
<svg class="a" style="left:834px;top:315px;" width="10" height="8" viewBox="0 0 10 8"><path d="M1 7L5 1L9 7Z" fill="#545454"/></svg>
<svg class="a" style="left:845px;top:315px;" width="10" height="8" viewBox="0 0 10 8"><path d="M1 7L5 1L9 7Z" fill="#545454"/></svg>
<svg class="a" style="left:856.5px;top:317.5px;" width="5" height="4" viewBox="0 0 5 4"><path d="M0.5 0.8L2.5 2.8L4.5 0.8" fill="none" stroke="#aaa" stroke-width="0.8"/></svg>
<div class="a" style="left:774px;top:327.5px;width:88px;height:1px;background:#4b4b4b;"></div>
<div class="a" style="left:777.1px;top:331.7px;width:7.2px;height:7.2px;background:#555555;"></div>
<div class="t" style="transform:scaleX(0.8152);left:787px;top:332.48px;font-size:6.4px;color:#cfcfcf;font-weight:normal;">Adjust angle after fixed</div>
<div class="a" style="left:774px;top:343px;width:88px;height:1px;background:#4b4b4b;"></div>
<div class="t" style="transform:scaleX(0.7765);left:778px;top:346.88px;font-size:6.4px;color:#6e6e6e;font-weight:normal;">Brush Size</div>
<div class="a" style="left:788px;top:353.3px;width:37.3px;height:4px;background:transparent;border:1px solid #555"></div>
<svg class="a" style="left:856px;top:350px;" width="6" height="6" viewBox="0 0 6 6"><rect x="0.5" y="0.5" width="5" height="5" fill="none" stroke="#5a5a5a" stroke-width="0.8"/></svg>
<div class="a" style="left:774px;top:360.5px;width:88px;height:1px;background:#4b4b4b;"></div>
<div class="t" style="transform:scaleX(0.8306);left:777.3px;top:364.28px;font-size:6.4px;color:#d0d0d0;font-weight:normal;">Opacity</div>
<div class="a" style="left:788px;top:370.7px;width:38px;height:4px;background:#585858;"></div>
<div class="t" style="transform:scaleX(0.7777);left:839.3px;top:367.28px;font-size:6.4px;color:#d0d0d0;font-weight:normal;">100</div>
<svg class="a" style="left:848px;top:367px;" width="5" height="8" viewBox="0 0 5 8"><path d="M0.5 2.5L2.5 0.8L4.5 2.5M0.5 5.5L2.5 7.2L4.5 5.5" fill="none" stroke="#aaa" stroke-width="0.7"/></svg>
<svg class="a" style="left:856px;top:368px;" width="6" height="6" viewBox="0 0 6 6"><circle cx="3" cy="3" r="2.5" fill="#4e4e4e"/></svg>
<div class="a" style="left:774px;top:378.5px;width:88px;height:1px;background:#4b4b4b;"></div>
<div class="t" style="transform:scaleX(0.8043);left:777.3px;top:384.58px;font-size:6.4px;color:#d0d0d0;font-weight:normal;">Anti-aliasing</div>
<div class="a" style="left:811.3px;top:381px;width:50.7px;height:12px;background:#4e4e4e;"></div>
<div class="a" style="left:833px;top:381px;width:11px;height:12px;background:#6b8cc8;"></div>
<svg class="a" style="left:813px;top:382px;" width="48" height="10" viewBox="0 0 48 10"><path d="M5 1.5L8.5 5L5 8.5L1.5 5Z" fill="#d4d4d4"/><circle cx="15.5" cy="5" r="3.5" fill="#d0d0d0"/><circle cx="25.8" cy="5" r="3.3" fill="#c6c6c6"/><defs><radialGradient id="rg"><stop offset="0.3" stop-color="#d0d0d0"/><stop offset="1" stop-color="#4e4e4e"/></radialGradient></defs><circle cx="36.3" cy="5" r="4" fill="url(#rg)"/><path d="M42.5 4L44.5 6L46.5 4" fill="none" stroke="#aaa" stroke-width="0.8"/></svg>
<div class="a" style="left:774px;top:395.5px;width:88px;height:1px;background:#4b4b4b;"></div>
<div class="t" style="transform:scaleX(0.8192);left:777.3px;top:400.98px;font-size:6.4px;color:#d0d0d0;font-weight:normal;">Brush shape</div>
<div class="a" style="left:808px;top:398.5px;width:47px;height:10.5px;background:#2e2e2e;"></div>
<div class="a" style="left:812.7px;top:399.7px;width:41.3px;height:8px;background:#ffffff;"></div>
<div class="a" style="left:855.3px;top:398px;width:6.7px;height:11px;background:#4a4a4a;"></div>
<svg class="a" style="left:856.5px;top:401.5px;" width="5" height="4" viewBox="0 0 5 4"><path d="M0.5 0.8L2.5 2.8L4.5 0.8" fill="none" stroke="#aaa" stroke-width="0.8"/></svg>
<div class="a" style="left:770px;top:441px;width:100px;height:9.5px;background:#474747;"></div>
<svg class="a" style="left:851px;top:442px;" width="8" height="8" viewBox="0 0 8 8"><circle cx="4" cy="4" r="3.3" fill="none" stroke="#c0c0c0" stroke-width="0.7"/><circle cx="4" cy="4" r="1" fill="#c0c0c0"/><path d="M4 1V3" stroke="#c0c0c0" stroke-width="0.7"/></svg>
<svg class="a" style="left:861px;top:442px;" width="8" height="8" viewBox="0 0 8 8"><circle cx="3" cy="3" r="2.2" fill="none" stroke="#c0c0c0" stroke-width="0.9"/><path d="M4.5 4.5L7.5 7.5" stroke="#c0c0c0" stroke-width="1.2"/></svg>
<div class="a" style="left:770px;top:450.5px;width:100px;height:11px;background:#3a3a3a;"></div>
<svg class="a" style="left:772px;top:453px;" width="5" height="5" viewBox="0 0 5 5"><path d="M0 0.8H5M0 2.5H5M0 4.2H5" stroke="#5e5e5e" stroke-width="0.9"/></svg>
<div class="a" style="left:779.6px;top:452.5px;width:40.6px;height:9px;background:#484848;"></div>
<svg class="a" style="left:781.5px;top:454px;" width="8" height="8" viewBox="0 0 8 8"><circle cx="4" cy="4" r="3.4" fill="none" stroke="#cfcfcf" stroke-width="0.8"/><rect x="2.5" y="2.5" width="3" height="3" fill="#cfcfcf"/></svg>
<div class="t" style="transform:scaleX(0.7677);left:792px;top:455.08px;font-size:6.4px;color:#c8c8c8;font-weight:normal;">Color Wheel</div>
<div class="a" style="left:823px;top:452.5px;width:42px;height:9px;background:#454545;"></div>
<svg class="a" style="left:825px;top:454.5px;" width="9" height="6" viewBox="0 0 9 6"><rect x="0.5" y="0.5" width="8" height="5" fill="none" stroke="#777" stroke-width="0.7"/><path d="M1 2.5H8M1 4H8" stroke="#777" stroke-width="0.6"/></svg>
<div class="t" style="transform:scaleX(0.7580);left:836px;top:455.08px;font-size:6.4px;color:#6a6a6a;font-weight:normal;">Color History</div>
<div class="a" style="left:770px;top:461.5px;width:100px;height:78.5px;background:#575757;"></div>
<div class="a" style="left:786.2px;top:463.6px;width:67.2px;height:65px;border-radius:50%;background:conic-gradient(from 0deg,#e4dc00 0deg,#a8e010 25deg,#30e020 60deg,#10e0a0 95deg,#10d8e0 120deg,#10a0f0 145deg,#2030f0 180deg,#8010f0 215deg,#e010e0 245deg,#f01080 265deg,#f01818 280deg,#f06010 315deg,#f0b000 340deg,#e4d800 355deg,#e4dc00 360deg);-webkit-mask:radial-gradient(closest-side,transparent 81.5%,#000 83.5%);mask:radial-gradient(closest-side,transparent 81.5%,#000 83.5%)"></div>
<div class="a" style="left:802.5px;top:480px;width:34.8px;height:34.8px;background:linear-gradient(to bottom,rgba(0,0,0,0),#000),linear-gradient(to right,#e6e6e6,#20e844)"></div>
<svg class="a" style="left:799.5px;top:494.8px;" width="5" height="5" viewBox="0 0 5 5"><circle cx="2.3" cy="2.3" r="1.9" fill="none" stroke="#d8d8d8" stroke-width="0.8"/></svg>
<svg class="a" style="left:846.3px;top:484.3px;" width="6" height="5.5" viewBox="0 0 6 5.5"><rect x="0.5" y="0.5" width="5" height="4.5" rx="1" fill="#2ae050" stroke="#e8e8e8" stroke-width="0.9"/></svg>
<div class="a" style="left:769px;top:531px;width:17px;height:9px;background:#3b3b3b;"></div>
<svg class="a" style="left:770.5px;top:532.5px;" width="15" height="4.5" viewBox="0 0 15 4.5"><path d="M0.5 2.5Q2 0.5 3.5 2.5T6.5 2.5T9.5 2.5T12.5 2.5T14.8 2" fill="none" stroke="#e8e8e8" stroke-width="1.3"/></svg>
<div class="a" style="left:777px;top:521px;width:8.6px;height:8.6px;background:#ffffff;"></div>
<div class="a" style="left:769.4px;top:514.5px;width:11.2px;height:11.2px;background:#838383;border:1px solid #8aa2d8;border-radius:1px"></div>
<div class="a" style="left:809.5px;top:533.3px;width:3px;height:3px;background:#e01010;"></div>
<div class="t" style="transform:scaleX(0.8230);left:814.6px;top:532.55px;font-size:6.2px;color:#e0e0e0;font-weight:normal;">128</div>
<div class="a" style="left:825.5px;top:533.3px;width:3px;height:3px;background:#10a030;"></div>
<div class="t" style="transform:scaleX(0.8424);left:830px;top:532.55px;font-size:6.2px;color:#e0e0e0;font-weight:normal;">128</div>
<div class="a" style="left:841.5px;top:533.3px;width:3px;height:3px;background:#2030e8;"></div>
<div class="t" style="transform:scaleX(0.8714);left:846px;top:532.55px;font-size:6.2px;color:#e0e0e0;font-weight:normal;">128</div>
<svg class="a" style="left:859.5px;top:528px;" width="9" height="9" viewBox="0 0 9 9"><circle cx="4.5" cy="4.5" r="3.8" fill="none" stroke="#e0e0e0" stroke-width="0.8"/><path d="M3.5 2.3V6.7M3.5 2.3Q6.5 2.5 6.5 4.5Q6.5 6.5 3.5 6.7" fill="none" stroke="#e0e0e0" stroke-width="0.7"/></svg>
<div class="a" style="left:871px;top:23px;width:89px;height:11.5px;background:#393939;"></div>
<svg class="a" style="left:873px;top:26px;" width="3" height="7" viewBox="0 0 3 7"><path d="M1.5 0V7" stroke="#6a6a6a" stroke-width="2" stroke-dasharray="1 1"/></svg>
<svg class="a" style="left:938px;top:26px;" width="4" height="6" viewBox="0 0 4 6"><path d="M0.8 0.5L3 3L0.8 5.5" fill="none" stroke="#8a8a8a" stroke-width="0.9"/></svg>
<svg class="a" style="left:950px;top:26px;" width="6" height="6" viewBox="0 0 6 6"><path d="M0.5 0.5L2.7 3L0.5 5.5M3.3 0.5L5.5 3L3.3 5.5" fill="none" stroke="#8a8a8a" stroke-width="0.9"/></svg>
<svg class="a" style="left:957px;top:26px;" width="4" height="6" viewBox="0 0 4 6"><path d="M3.5 0.5L1.3 3L3.5 5.5" fill="none" stroke="#6a6a6a" stroke-width="0.9"/></svg>
<div class="a" style="left:871px;top:34.5px;width:89px;height:10px;background:#393939;"></div>
<svg class="a" style="left:874px;top:37.5px;" width="5" height="5" viewBox="0 0 5 5"><path d="M0 0.8H5M0 2.5H5M0 4.2H5" stroke="#585858" stroke-width="0.9"/></svg>
<div class="a" style="left:882.4px;top:36px;width:25.4px;height:8px;background:#474747;"></div>
<svg class="a" style="left:884px;top:36.5px;" width="8" height="8" viewBox="0 0 8 8"><rect x="0.8" y="0.8" width="6.4" height="6" rx="2.5" fill="none" stroke="#c8c8c8" stroke-width="0.8"/><rect x="2.5" y="2.5" width="3" height="2.5" fill="#777"/></svg>
<div class="t" style="transform:scaleX(0.8878);left:895px;top:37.55px;font-size:6.2px;color:#c8c8c8;font-weight:normal;">Navi</div>
<div class="a" style="left:910px;top:36px;width:13.6px;height:8px;background:#424242;"></div>
<svg class="a" style="left:912px;top:37.5px;" width="9" height="5" viewBox="0 0 9 5"><rect x="1" y="0.5" width="7" height="4.5" fill="none" stroke="#888" stroke-width="0.7"/></svg>
<div class="a" style="left:925.5px;top:36px;width:13.5px;height:8px;background:#424242;"></div>
<svg class="a" style="left:928px;top:37.5px;" width="9" height="5" viewBox="0 0 9 5"><path d="M0.5 4.5Q4.5 -1.5 8.5 4.5" fill="none" stroke="#888" stroke-width="0.8"/></svg>
<div class="a" style="left:941px;top:36px;width:13px;height:8px;background:#424242;"></div>
<svg class="a" style="left:943px;top:37px;" width="9" height="7" viewBox="0 0 9 7"><path d="M1 6.5V3.5Q1 0.5 4.5 0.5Q8 0.5 8 3.5V6.5" fill="none" stroke="#888" stroke-width="0.8"/></svg>
<div class="a" style="left:871px;top:44px;width:84px;height:1px;background:#474747;"></div>
<div class="a" style="left:871px;top:45px;width:84px;height:28.7px;background:#2d2d2d;"></div>
<div class="a" style="left:893px;top:45.7px;width:39.4px;height:27.2px;background:#99dfe5;"></div>
<div class="a" style="left:884px;top:45px;width:1px;height:28.7px;background:#8a1e1e;"></div>
<div class="a" style="left:939px;top:45px;width:1px;height:28.7px;background:#8a1e1e;"></div>
<div class="a" style="left:955px;top:34.5px;width:5px;height:505.5px;background:#393939;"></div>
<div class="a" style="left:955px;top:107px;width:1px;height:433px;background:#333333;"></div>
<div class="a" style="left:871px;top:73.7px;width:84px;height:21.1px;background:#474747;"></div>
<div class="t" style="transform:scaleX(0.9131);left:873.6px;top:77.75px;font-size:6.2px;color:#d8d8d8;font-weight:normal;">30.0</div>
<svg class="a" style="left:886.3px;top:77.6px;" width="13" height="5" viewBox="0 0 13 5"><path d="M0 2L13 0V5H0Z" fill="#2a2a2a"/></svg>
<div class="t" style="transform:scaleX(0.9292);left:875px;top:87.95px;font-size:6.2px;color:#d8d8d8;font-weight:normal;">0.0</div>
<div class="a" style="left:873px;top:86px;width:13px;height:8.5px;background:transparent;border:1px solid #2e2e2e"></div>
<svg class="a" style="left:888px;top:86.5px;" width="12" height="6" viewBox="0 0 12 6"><path d="M0 6Q3 0 8 0.5L12 6Z" fill="#2a2a2a"/></svg>
<div class="a" style="left:885px;top:75px;width:2px;height:19px;background:#7a7a7a;"></div>
<svg class="a" style="left:903.1999999999999px;top:76px;" width="8.4" height="8.4" viewBox="0 0 8.4 8.4"><circle cx="4.2" cy="4.2" r="3.7" fill="none" stroke="#c8c8c8" stroke-width="0.7"/></svg>
<svg class="a" style="left:913.0999999999999px;top:76px;" width="8.4" height="8.4" viewBox="0 0 8.4 8.4"><circle cx="4.2" cy="4.2" r="3.7" fill="none" stroke="#c8c8c8" stroke-width="0.7"/></svg>
<svg class="a" style="left:923.4px;top:76px;" width="8.4" height="8.4" viewBox="0 0 8.4 8.4"><circle cx="4.2" cy="4.2" r="3.7" fill="none" stroke="#c8c8c8" stroke-width="0.7"/></svg>
<svg class="a" style="left:903.2px;top:76px;" width="8.4" height="8.4" viewBox="0 0 8.4 8.4"><path d="M2.2 4.2H6.2" stroke="#c8c8c8" stroke-width="0.8"/></svg>
<svg class="a" style="left:913.1px;top:76px;" width="8.4" height="8.4" viewBox="0 0 8.4 8.4"><path d="M2.2 4.2H6.2M4.2 2.2V6.2" stroke="#c8c8c8" stroke-width="0.8"/></svg>
<svg class="a" style="left:923.4px;top:76px;" width="8.4" height="8.4" viewBox="0 0 8.4 8.4"><rect x="2.7" y="2.7" width="3" height="3" fill="#c8c8c8"/></svg>
<svg class="a" style="left:903.2px;top:86px;" width="8.4" height="8.4" viewBox="0 0 8.4 8.4"><path d="M1.5 4.2A3 3 0 1 0 4.2 1.2" fill="none" stroke="#c8c8c8" stroke-width="0.8"/><path d="M0.5 4L2.5 2.2V5.5Z" fill="#c8c8c8"/></svg>
<svg class="a" style="left:913.1px;top:86px;" width="8.4" height="8.4" viewBox="0 0 8.4 8.4"><path d="M6.9 4.2A3 3 0 1 1 4.2 1.2" fill="none" stroke="#c8c8c8" stroke-width="0.8"/><path d="M7.9 4L5.9 2.2V5.5Z" fill="#c8c8c8"/></svg>
<svg class="a" style="left:923.4px;top:86px;" width="8.4" height="8.4" viewBox="0 0 8.4 8.4"><circle cx="4.2" cy="4.2" r="3.7" fill="none" stroke="#c8c8c8" stroke-width="0.7"/><path d="M4.2 1.5V5M2.8 3.8L4.2 5.3L5.6 3.8" fill="none" stroke="#c8c8c8" stroke-width="0.7"/></svg>
<div class="a" style="left:934px;top:75px;width:1px;height:19px;background:#3e3e3e;"></div>
<svg class="a" style="left:936px;top:76px;" width="9" height="9" viewBox="0 0 9 9"><rect x="0.5" y="0.5" width="4.5" height="4.5" fill="none" stroke="#c0c0c0" stroke-width="0.8"/><rect x="3.5" y="3.5" width="4.5" height="4.5" fill="#777" stroke="#c0c0c0" stroke-width="0.8"/></svg>
<svg class="a" style="left:946px;top:76px;" width="9" height="9" viewBox="0 0 9 9"><rect x="0.5" y="0.5" width="7.5" height="7.5" rx="1" fill="none" stroke="#c0c0c0" stroke-width="0.8"/><path d="M2 2L6.5 6.5M2 2H4M2 2V4M6.5 6.5H4.5M6.5 6.5V4.5" stroke="#c0c0c0" stroke-width="0.8" fill="none"/></svg>
<svg class="a" style="left:936px;top:86px;" width="9" height="8" viewBox="0 0 9 8"><path d="M4.5 0V8" stroke="#c0c0c0" stroke-width="0.7"/><path d="M0.5 1.5L3.5 4L0.5 6.5Z" fill="none" stroke="#c0c0c0" stroke-width="0.7"/><path d="M8.5 1.5L5.5 4L8.5 6.5Z" fill="#c0c0c0"/></svg>
<svg class="a" style="left:946px;top:86px;" width="9" height="9" viewBox="0 0 9 9"><path d="M0.5 4.5H8.5" stroke="#c0c0c0" stroke-width="0.7"/><path d="M1.5 0.5L4.5 3.5L7.5 0.5Z" fill="#c0c0c0"/><path d="M1.5 8.5L4.5 5.5L7.5 8.5Z" fill="none" stroke="#c0c0c0" stroke-width="0.7"/></svg>
<div class="a" style="left:871px;top:94.8px;width:84px;height:10.7px;background:#393939;"></div>
<svg class="a" style="left:874px;top:98px;" width="5" height="5" viewBox="0 0 5 5"><path d="M0 0.8H5M0 2.5H5M0 4.2H5" stroke="#585858" stroke-width="0.9"/></svg>
<div class="a" style="left:880.8px;top:98px;width:37.2px;height:7.5px;background:#474747;"></div>
<svg class="a" style="left:883px;top:98.5px;" width="9" height="7" viewBox="0 0 9 7"><ellipse cx="4.5" cy="3.5" rx="4" ry="3" fill="none" stroke="#c0c0c0" stroke-width="0.7"/><circle cx="5" cy="3.5" r="1.6" fill="#c0c0c0"/></svg>
<div class="t" style="transform:scaleX(0.7018);left:895px;top:99.05px;font-size:6.2px;color:#c4c4c4;font-weight:normal;">Brush Size</div>
<div class="a" style="left:871px;top:105.5px;width:84px;height:1.5px;background:#474747;"></div>
<div class="a" style="left:871px;top:107px;width:77px;height:20px;background:#3f3f3f;"></div>
<div class="a" style="left:886.3px;top:107px;width:1px;height:20px;background:#2e2e2e;"></div>
<div class="a" style="left:901.9px;top:107px;width:1px;height:20px;background:#2e2e2e;"></div>
<div class="a" style="left:917.4px;top:107px;width:1px;height:20px;background:#2e2e2e;"></div>
<div class="a" style="left:933px;top:107px;width:1px;height:20px;background:#2e2e2e;"></div>
<div class="t" style="left:875.75px;transform:scaleX(0.7550);top:119.55px;font-size:6.2px;color:#a8a8a8;font-weight:normal;">0.7</div>
<div class="t" style="left:893.25px;transform:scaleX(0.7240);top:119.55px;font-size:6.2px;color:#a8a8a8;font-weight:normal;">1</div>
<div class="t" style="left:906.55px;transform:scaleX(0.7550);top:119.55px;font-size:6.2px;color:#a8a8a8;font-weight:normal;">1.5</div>
<div class="t" style="left:923.45px;transform:scaleX(1.0136);top:119.55px;font-size:6.2px;color:#a8a8a8;font-weight:normal;">2</div>
<div class="t" style="left:937.55px;transform:scaleX(0.7550);top:119.55px;font-size:6.2px;color:#a8a8a8;font-weight:normal;">2.5</div>
<div class="a" style="left:948px;top:107px;width:6px;height:20px;background:#3a3a3a;"></div>
<div class="a" style="left:948.2px;top:107.5px;width:5.6px;height:6px;background:#525252;"></div>
<svg class="a" style="left:949px;top:108.5px;" width="4" height="4" viewBox="0 0 4 4"><path d="M0.5 3L2 1.2L3.5 3" fill="none" stroke="#aaa" stroke-width="0.7"/></svg>
<svg class="a" style="left:948.5px;top:114px;" width="5" height="5" viewBox="0 0 5 5"><circle cx="2.5" cy="2.5" r="2.3" fill="#4e4e4e"/></svg>
<div class="a" style="left:948.2px;top:120.5px;width:5.6px;height:6px;background:#525252;"></div>
<svg class="a" style="left:949px;top:121.5px;" width="4" height="4" viewBox="0 0 4 4"><path d="M0.5 1L2 2.8L3.5 1" fill="none" stroke="#aaa" stroke-width="0.7"/></svg>
<div class="a" style="left:871px;top:127px;width:84px;height:2.5px;background:#2f2f2f;"></div>
<div class="a" style="left:871px;top:129.4px;width:84px;height:10px;background:#393939;"></div>
<svg class="a" style="left:874px;top:132.5px;" width="5" height="5" viewBox="0 0 5 5"><path d="M0 0.8H5M0 2.5H5M0 4.2H5" stroke="#585858" stroke-width="0.9"/></svg>
<div class="a" style="left:881.3px;top:130.8px;width:12.8px;height:8.6px;background:#4a4a4a;"></div>
<svg class="a" style="left:883px;top:131px;" width="9" height="9" viewBox="0 0 9 9"><path d="M4.5 0.8L8 2.5V6.5L4.5 8.2L1 6.5V2.5Z" fill="none" stroke="#c8c8c8" stroke-width="0.8"/><path d="M1 2.5L4.5 4.3L8 2.5M4.5 4.3V8" fill="none" stroke="#c8c8c8" stroke-width="0.6"/></svg>
<div class="a" style="left:896px;top:131px;width:13.5px;height:8.4px;background:#404040;"></div>
<div class="a" style="left:911.5px;top:131px;width:13.5px;height:8.4px;background:#404040;"></div>
<div class="a" style="left:927px;top:131px;width:13.5px;height:8.4px;background:#404040;"></div>
<div class="a" style="left:941.5px;top:131px;width:13.5px;height:8.4px;background:#404040;"></div>
<svg class="a" style="left:898.5px;top:132px;" width="8" height="6" viewBox="0 0 8 6"><rect x="0.5" y="0.5" width="7" height="5" fill="none" stroke="#8a8a8a" stroke-width="0.7"/></svg>
<svg class="a" style="left:914px;top:132px;" width="8" height="6" viewBox="0 0 8 6"><path d="M0.5 5.5Q4 -1.5 7.5 5.5" fill="none" stroke="#8a8a8a" stroke-width="0.7"/></svg>
<svg class="a" style="left:929.5px;top:132px;" width="8" height="6" viewBox="0 0 8 6"><ellipse cx="4" cy="3" rx="3.5" ry="2.5" fill="none" stroke="#8a8a8a" stroke-width="0.7"/></svg>
<svg class="a" style="left:945px;top:132px;" width="8" height="7" viewBox="0 0 8 7"><rect x="0.5" y="1" width="6" height="5" fill="none" stroke="#8a8a8a" stroke-width="0.7"/><circle cx="6" cy="4" r="2.5" fill="#666" stroke="#999" stroke-width="0.6"/></svg>
<div class="a" style="left:871px;top:139.4px;width:84px;height:1px;background:#474747;"></div>
<div class="a" style="left:871px;top:140.4px;width:77px;height:74px;background:#3f3f3f;"></div>
<div class="a" style="left:948px;top:140.4px;width:7px;height:74px;background:#434343;"></div>
<div class="t" style="transform:scaleX(0.8254);left:876.3px;top:142.28px;font-size:6.4px;color:#cfcfcf;font-weight:normal;">Effect</div>
<div class="a" style="left:891px;top:145px;width:55px;height:1px;background:#505050;"></div>
<div class="a" style="left:895.2px;top:148.9px;width:51.7px;height:9.4px;background:#4a4a4a;"></div>
<svg class="a" style="left:896.5px;top:149.5px;" width="50" height="8.5" viewBox="0 0 50 8.5"><circle cx="4.2" cy="4" r="3.3" fill="none" stroke="#c8c8c8" stroke-width="0.7"/><circle cx="15" cy="4" r="3.3" fill="#8a8a8a" stroke="#c8c8c8" stroke-width="0.6"/><path d="M12.5 5.5L17.5 2.5" stroke="#ddd" stroke-width="0.8"/><g fill="#bdbdbd"><rect x="22.5" y="1" width="1.2" height="1.2"/><rect x="24.9" y="1" width="1.2" height="1.2"/><rect x="27.3" y="1" width="1.2" height="1.2"/><rect x="23.7" y="2.2" width="1.2" height="1.2"/><rect x="26.1" y="2.2" width="1.2" height="1.2"/><rect x="22.5" y="3.4" width="1.2" height="1.2"/><rect x="24.9" y="3.4" width="1.2" height="1.2"/><rect x="27.3" y="3.4" width="1.2" height="1.2"/><rect x="23.7" y="4.6" width="1.2" height="1.2"/><rect x="26.1" y="4.6" width="1.2" height="1.2"/><rect x="22.5" y="5.8" width="1.2" height="1.2"/><rect x="24.9" y="5.8" width="1.2" height="1.2"/><rect x="27.3" y="5.8" width="1.2" height="1.2"/></g><rect x="33.5" y="0.5" width="5" height="5" rx="1" fill="#8a8a8a" stroke="#b0b0b0" stroke-width="0.6"/><rect x="35.5" y="2.5" width="5" height="5" rx="1" fill="#777" stroke="#b0b0b0" stroke-width="0.6"/><path d="M44 3L46 5L48 3" fill="none" stroke="#bbb" stroke-width="0.8"/></svg>
<div class="t" style="transform:scaleX(0.8000);left:876.3px;top:160.98px;font-size:6.4px;color:#cfcfcf;font-weight:normal;">Expression color</div>
<div class="a" style="left:916px;top:163.5px;width:30px;height:1px;background:#505050;"></div>
<div class="a" style="left:879.7px;top:168.9px;width:40.5px;height:9.4px;background:#4a4a4a;"></div>
<svg class="a" style="left:885px;top:169.3px;" width="10" height="9" viewBox="0 0 10 9"><circle cx="3" cy="5.5" r="2.3" fill="#30c050"/><circle cx="6.5" cy="5.8" r="2.3" fill="#4a80e0"/><circle cx="4.8" cy="3" r="2.3" fill="#e06030" opacity="0.85"/><circle cx="5" cy="1" r="0.9" fill="#c040c0"/></svg>
<div class="t" style="transform:scaleX(0.7853);left:896px;top:171.28px;font-size:6.4px;color:#cfcfcf;font-weight:normal;">Color</div>
<svg class="a" style="left:913.5px;top:171.5px;" width="5" height="4" viewBox="0 0 5 4"><path d="M0.5 0.8L2.5 2.8L4.5 0.8" fill="none" stroke="#bbb" stroke-width="0.8"/></svg>
<div class="a" style="left:871px;top:214.4px;width:84px;height:10.6px;background:#393939;"></div>
<svg class="a" style="left:874px;top:217.5px;" width="5" height="5" viewBox="0 0 5 5"><path d="M0 0.8H5M0 2.5H5M0 4.2H5" stroke="#585858" stroke-width="0.9"/></svg>
<div class="a" style="left:881.3px;top:217.8px;width:26.1px;height:7.2px;background:#474747;"></div>
<svg class="a" style="left:884px;top:217.5px;" width="8" height="8" viewBox="0 0 8 8"><path d="M4 0.5L7.5 2.2V6L4 7.7L0.5 6V2.2Z" fill="none" stroke="#bbb" stroke-width="0.7"/><path d="M0.5 2.2L4 4L7.5 2.2M4 4V7.7" fill="none" stroke="#bbb" stroke-width="0.6"/></svg>
<div class="t" style="transform:scaleX(0.7427);left:895px;top:219.05px;font-size:6.2px;color:#cfcfcf;font-weight:normal;">Layer</div>
<div class="a" style="left:909px;top:217.8px;width:13.5px;height:7.2px;background:#404040;"></div>
<svg class="a" style="left:911px;top:218.5px;" width="9" height="6" viewBox="0 0 9 6"><path d="M0.5 3H3M5 3H8.5M4.5 0.5V5.5" stroke="#777" stroke-width="0.7"/></svg>
<div class="a" style="left:924px;top:217.8px;width:13.5px;height:7.2px;background:#404040;"></div>
<svg class="a" style="left:926px;top:218.5px;" width="9" height="6" viewBox="0 0 9 6"><path d="M0.5 5.5L8.5 0.5M1 3Q4.5 0.5 8 3" fill="none" stroke="#777" stroke-width="0.7"/></svg>
<div class="a" style="left:871px;top:225px;width:77px;height:35.3px;background:#474747;"></div>
<div class="a" style="left:948px;top:225px;width:7px;height:315px;background:#444444;"></div>
<div class="a" style="left:871.9px;top:226.5px;width:18.9px;height:10px;background:#555555;"></div>
<svg class="a" style="left:873px;top:227.5px;" width="9" height="8" viewBox="0 0 9 8"><rect x="0.5" y="0.5" width="7.5" height="7" rx="1" fill="none" stroke="#c8c8c8" stroke-width="0.7"/></svg>
<svg class="a" style="left:885px;top:230px;" width="5" height="4" viewBox="0 0 5 4"><path d="M0.5 0.8L2.5 2.8L4.5 0.8" fill="none" stroke="#bbb" stroke-width="0.8"/></svg>
<div class="a" style="left:893px;top:226.5px;width:20px;height:10px;background:#555555;"></div>
<div class="t" style="transform:scaleX(0.7497);left:894.5px;top:228.92px;font-size:6px;color:#a8a8a8;font-weight:normal;">Norm</div>
<svg class="a" style="left:907.5px;top:230px;" width="5" height="4" viewBox="0 0 5 4"><path d="M0.5 0.8L2.5 2.8L4.5 0.8" fill="none" stroke="#bbb" stroke-width="0.8"/></svg>
<div class="a" style="left:915.2px;top:230px;width:20px;height:4.4px;background:#dcdcdc;"></div>
<svg class="a" style="left:915.2px;top:230px;" width="20" height="4.4" viewBox="0 0 20 4.4"><path d="M2 2.2H18" stroke="#8a8a8a" stroke-width="0.6" stroke-dasharray="1 1"/></svg>
<div class="a" style="left:934.5px;top:227.5px;width:1.5px;height:9px;background:#888888;"></div>
<div class="t" style="transform:scaleX(0.8327);left:938.6px;top:228.35px;font-size:6.2px;color:#d8d8d8;font-weight:normal;">100</div>
<svg class="a" style="left:947.5px;top:228px;" width="5" height="8" viewBox="0 0 5 8"><path d="M0.5 2.5L2.5 0.8L4.5 2.5M0.5 5.5L2.5 7.2L4.5 5.5" fill="none" stroke="#aaa" stroke-width="0.7"/></svg>
<svg class="a" style="left:873px;top:239px;" width="8" height="8" viewBox="0 0 8 8"><rect x="0.5" y="0.5" width="5.5" height="5.5" fill="none" stroke="#c4c4c4" stroke-width="0.7"/><rect x="2" y="2" width="5.5" height="5.5" fill="#888" stroke="#c4c4c4" stroke-width="0.7"/></svg>
<svg class="a" style="left:882.5px;top:239px;" width="8" height="8" viewBox="0 0 8 8"><path d="M0.5 1.5H7.5M4 1.5V7.5M2 4H6" stroke="#c4c4c4" stroke-width="0.9"/><rect x="2.5" y="5.5" width="3" height="2" fill="#c4c4c4"/></svg>
<svg class="a" style="left:893px;top:239px;" width="8" height="8" viewBox="0 0 8 8"><rect x="0.5" y="0.5" width="4" height="5" fill="none" stroke="#c4c4c4" stroke-width="0.7"/><path d="M4 4L7.5 7.5" stroke="#c4c4c4" stroke-width="0.9"/></svg>
<svg class="a" style="left:903px;top:239px;" width="8" height="8" viewBox="0 0 8 8"><path d="M2 3.5V2.2Q2 0.5 4 0.5Q6 0.5 6 2.2V3.5" fill="none" stroke="#c4c4c4" stroke-width="0.7"/><rect x="1" y="3.5" width="6" height="4.5" fill="#c4c4c4"/></svg>
<svg class="a" style="left:913px;top:239px;" width="8" height="8" viewBox="0 0 8 8"><path d="M0.5 0.5L3 3M7.5 0.5L5 3M0.5 7.5L3 5M7.5 7.5L5 5" stroke="#c4c4c4" stroke-width="0.9"/><rect x="2.5" y="2.5" width="3" height="3" fill="#c4c4c4"/></svg>
<svg class="a" style="left:925px;top:239px;" width="12" height="8" viewBox="0 0 12 8"><rect x="0.5" y="0.5" width="6" height="6" fill="none" stroke="#777" stroke-width="0.7"/><path d="M8 3L9.5 4.5L11 3" fill="none" stroke="#777" stroke-width="0.7"/></svg>
<svg class="a" style="left:941px;top:239px;" width="12" height="8" viewBox="0 0 12 8"><rect x="0.5" y="0.5" width="6" height="6" fill="none" stroke="#777" stroke-width="0.7"/><path d="M1 7L7 1" stroke="#777" stroke-width="0.7"/><path d="M8 3L9.5 4.5L11 3" fill="none" stroke="#777" stroke-width="0.7"/></svg>
<svg class="a" style="left:873.5px;top:250.5px;" width="9" height="9" viewBox="0 0 9 9"><path d="M0.5 1H6.5V4M0.5 1V7.5H4" fill="none" stroke="#c4c4c4" stroke-width="0.8"/><circle cx="6.5" cy="6.5" r="2" fill="#777" stroke="#c4c4c4" stroke-width="0.6"/></svg>
<svg class="a" style="left:884px;top:250.5px;" width="9" height="9" viewBox="0 0 9 9"><rect x="0.5" y="0.5" width="6.5" height="6.5" fill="none" stroke="#c4c4c4" stroke-width="0.8"/><rect x="2" y="2" width="3.5" height="3.5" fill="#999"/><circle cx="6.5" cy="6.5" r="2" fill="#777" stroke="#c4c4c4" stroke-width="0.6"/></svg>
<svg class="a" style="left:894.5px;top:250.5px;" width="9" height="9" viewBox="0 0 9 9"><path d="M0.5 1.5H3.5L4.5 2.5H7.5V6.5H0.5Z" fill="#999" stroke="#c4c4c4" stroke-width="0.7"/><circle cx="6.5" cy="6.5" r="2" fill="#777" stroke="#c4c4c4" stroke-width="0.6"/></svg>
<svg class="a" style="left:905px;top:250.5px;" width="9" height="9" viewBox="0 0 9 9"><circle cx="5" cy="3" r="2.5" fill="none" stroke="#777" stroke-width="0.7"/><path d="M1 8L3.5 4.8" stroke="#777" stroke-width="0.7"/></svg>
<svg class="a" style="left:915px;top:250.5px;" width="9" height="9" viewBox="0 0 9 9"><circle cx="3" cy="5.5" r="2.5" fill="none" stroke="#c4c4c4" stroke-width="0.7"/><circle cx="5.5" cy="3" r="2.5" fill="none" stroke="#c4c4c4" stroke-width="0.7"/></svg>
<svg class="a" style="left:924px;top:250.5px;" width="9" height="9" viewBox="0 0 9 9"><rect x="0.5" y="0.5" width="7.5" height="7.5" fill="#e8e8e8"/><circle cx="4.25" cy="4.25" r="2.3" fill="#333"/></svg>
<svg class="a" style="left:936px;top:250.5px;" width="9" height="9" viewBox="0 0 9 9"><rect x="0.5" y="1.5" width="7.5" height="6" fill="none" stroke="#777" stroke-width="0.7"/><circle cx="4.5" cy="4.5" r="1.2" fill="#777"/></svg>
<svg class="a" style="left:945.5px;top:250.5px;" width="8" height="9" viewBox="0 0 8 9"><path d="M1 1.5H7M3 0.5H5M1.5 1.5L2 8H6L6.5 1.5" fill="none" stroke="#777" stroke-width="0.7"/></svg>
<div class="a" style="left:871px;top:260.3px;width:77px;height:278px;background:#3f3f3f;"></div>
<div class="a" style="left:881px;top:261.5px;width:1px;height:16px;background:#333333;"></div>
<div class="a" style="left:890px;top:261.5px;width:1px;height:16px;background:#333333;"></div>
<div class="a" style="left:890.3px;top:261.5px;width:57.8px;height:15.7px;background:#606e8e;"></div>
<svg class="a" style="left:872.5px;top:266.5px;" width="8" height="5" viewBox="0 0 8 5"><path d="M0.5 3Q4 -0.5 7.5 3Q4 5.5 0.5 3Z" fill="#bdbdbd"/><circle cx="4" cy="2.8" r="1.1" fill="#393939"/></svg>
<svg class="a" style="left:882.5px;top:266px;" width="7" height="7" viewBox="0 0 7 7"><path d="M0.5 6.5H6.5M1 6L5.5 1" stroke="#c8c8c8" stroke-width="0.8"/></svg>
<div class="a" style="left:893.3px;top:262.1px;width:18.1px;height:13.9px;background:#ffffff;border:1px solid #2e2e2e"></div>
<svg class="a" style="left:894.5px;top:263.3px;" width="15.7" height="11.5" viewBox="0 0 15.7 11.5"><defs><pattern id="ck" width="4" height="4" patternUnits="userSpaceOnUse"><rect width="4" height="4" fill="#fff"/><rect width="2" height="2" fill="#c4c4c4"/><rect x="2" y="2" width="2" height="2" fill="#c4c4c4"/></pattern></defs><rect x="0.5" y="0.5" width="14.7" height="10.5" fill="url(#ck)"/></svg>
<div class="t" style="transform:scaleX(0.7768);left:915px;top:263.97px;font-size:6.3px;color:#c8d0e0;font-weight:normal;">100 % Normal</div>
<div class="t" style="transform:scaleX(0.8089);left:915px;top:270.07px;font-size:6.3px;color:#c8d0e0;font-weight:normal;">Layer 1</div>
<div class="a" style="left:871px;top:277.2px;width:77px;height:1px;background:#303030;"></div>
<div class="a" style="left:881px;top:278.2px;width:1px;height:16px;background:#333333;"></div>
<div class="a" style="left:890px;top:278.2px;width:1px;height:16px;background:#333333;"></div>
<svg class="a" style="left:872.5px;top:282.5px;" width="8" height="5" viewBox="0 0 8 5"><path d="M0.5 3Q4 -0.5 7.5 3Q4 5.5 0.5 3Z" fill="#bdbdbd"/><circle cx="4" cy="2.8" r="1.1" fill="#393939"/></svg>
<div class="a" style="left:883.5px;top:284px;width:4px;height:4px;background:transparent;border:1px solid #3e3e3e"></div>
<div class="a" style="left:893.9px;top:279.6px;width:16.9px;height:12.6px;background:#99dfe5;"></div>
<div class="a" style="left:916.8px;top:280.2px;width:8.8px;height:7.8px;background:#f0f0f0;"></div>
<svg class="a" style="left:917.5px;top:281px;" width="7.5" height="6.5" viewBox="0 0 7.5 6.5"><path d="M1.5 0.5V5.5H5.5" fill="none" stroke="#333" stroke-width="0.8"/><path d="M5.5 0.5V4" stroke="#333" stroke-width="0.8"/></svg>
<div class="t" style="transform:scaleX(0.8327);left:927.6px;top:286.27px;font-size:6.3px;color:#c8c8c8;font-weight:normal;">Paper</div>
<div class="a" style="left:871px;top:294px;width:77px;height:1px;background:#303030;"></div>
<div class="a" style="left:236.3px;top:141.9px;width:25.2px;height:20.7px;background:transparent;border:1px solid #67a39a"></div>
<svg class="a" style="left:246.5px;top:150.3px;" width="4.5" height="4.5" viewBox="0 0 4.5 4.5"><path d="M2.25 0.2V4.3M0.2 2.25H4.3" stroke="#568e88" stroke-width="0.8"/></svg>
<div class="a" style="left:273.8px;top:173.7px;width:11.8px;height:11.8px;border-radius:50%;background:#d8e274"></div>
<svg class="a" style="left:276.5px;top:176.5px;" width="6.5" height="6.5" viewBox="0 0 6.5 6.5"><g fill="#c8c070"><circle cx="3.25" cy="1.3" r="0.8"/><circle cx="1.3" cy="3.25" r="0.8"/><circle cx="5.2" cy="3.25" r="0.8"/><circle cx="3.25" cy="5.2" r="0.8"/></g></svg>
<div class="a" style="left:19.7px;top:525.5px;width:48.7px;height:6px;background:#555555;"></div>
<svg class="a" style="left:42px;top:526.5px;" width="26" height="5" viewBox="0 0 26 5"><path d="M0 5L26 0.5V5Z" fill="#303030"/></svg>
<div class="a" style="left:41px;top:526px;width:1.8px;height:5.5px;background:#9a9a9a;"></div>
<div class="t" style="transform:scaleX(0.8556);left:58px;top:526.42px;font-size:6px;color:#e6e6e6;font-weight:normal;">30.0</div>
<div class="a" style="left:73.5px;top:528.3px;width:3px;height:0.8px;background:#8a8a8a;"></div>
<svg class="a" style="left:83.8px;top:526.8px;" width="4" height="4" viewBox="0 0 4 4"><path d="M2 0V4M0 2H4" stroke="#8a8a8a" stroke-width="0.8"/></svg>
<div class="a" style="left:93.2px;top:527px;width:3px;height:3px;background:#d8d8d8;"></div>
<div class="a" style="left:100.5px;top:525.5px;width:11.5px;height:6px;background:#353535;"></div>
<div class="t" style="transform:scaleX(0.9588);left:101.5px;top:526.42px;font-size:6px;color:#e0e0e0;font-weight:normal;">0.0</div>
<div class="a" style="left:112.5px;top:525.5px;width:36.5px;height:6px;background:#555555;"></div>
<svg class="a" style="left:125px;top:526px;" width="24" height="5.5" viewBox="0 0 24 5.5"><path d="M0 5.5Q3 0.5 12 0.5Q21 0.5 24 5.5Z" fill="#303030"/></svg>
<div class="a" style="left:124px;top:526px;width:1.5px;height:5.5px;background:#9a9a9a;"></div>
<svg class="a" style="left:151.5px;top:526px;" width="7" height="5.5" viewBox="0 0 7 5.5"><path d="M0.8 5Q0.8 0.8 3.5 0.8Q6.2 0.8 6.2 5" fill="none" stroke="#cfcfcf" stroke-width="0.8"/></svg>
<svg class="a" style="left:161px;top:526px;" width="7" height="5.5" viewBox="0 0 7 5.5"><path d="M0.8 5Q0.8 0.8 3.5 0.8Q6.2 0.8 6.2 5" fill="none" stroke="#cfcfcf" stroke-width="0.8"/></svg>
<svg class="a" style="left:171px;top:526px;" width="7" height="5.5" viewBox="0 0 7 5.5"><circle cx="3.5" cy="3" r="2.4" fill="none" stroke="#cfcfcf" stroke-width="0.7"/><circle cx="3.5" cy="3" r="0.8" fill="#cfcfcf"/></svg>
<div class="a" style="left:180px;top:525.5px;width:6px;height:6px;background:#555555;"></div>
<svg class="a" style="left:181.5px;top:526.5px;" width="4" height="4" viewBox="0 0 4 4"><path d="M3 0.3L1 2L3 3.7" fill="none" stroke="#cfcfcf" stroke-width="0.8"/></svg>
<div class="a" style="left:188px;top:525.5px;width:148px;height:6px;background:#474747;"></div>
<div class="a" style="left:336px;top:526px;width:255px;height:5px;border-radius:2.5px;background:#666666"></div>
<div class="a" style="left:762.3px;top:193.5px;width:5.4px;height:202px;border-radius:2.5px;background:#5c5c5c"></div>
<div class="a" style="left:756px;top:525.5px;width:6px;height:6px;background:#555555;"></div>
<svg class="a" style="left:757.5px;top:526.5px;" width="4" height="4" viewBox="0 0 4 4"><path d="M1 0.3L3 2L1 3.7" fill="none" stroke="#aaa" stroke-width="0.8"/></svg>
<div class="a" style="left:762px;top:518.5px;width:6px;height:6px;background:#555555;"></div>
<svg class="a" style="left:763px;top:520px;" width="4" height="3" viewBox="0 0 4 3"><path d="M0.5 0.5L2 2.2L3.5 0.5" fill="none" stroke="#aaa" stroke-width="0.7"/></svg>
<div class="a" style="left:762px;top:47px;width:6px;height:7px;background:#555555;"></div>
<svg class="a" style="left:763px;top:49px;" width="4" height="3" viewBox="0 0 4 3"><path d="M0.5 2.5L2 0.8L3.5 2.5" fill="none" stroke="#aaa" stroke-width="0.7"/></svg>
<svg class="a" style="left:21.5px;top:533px;" width="6" height="6" viewBox="0 0 6 6"><circle cx="3" cy="1.5" r="1.2" fill="none" stroke="#9a9a9a" stroke-width="0.7"/><path d="M0.5 5.5L3 3L5.5 5.5" fill="none" stroke="#9a9a9a" stroke-width="0.7"/></svg></body></html>
